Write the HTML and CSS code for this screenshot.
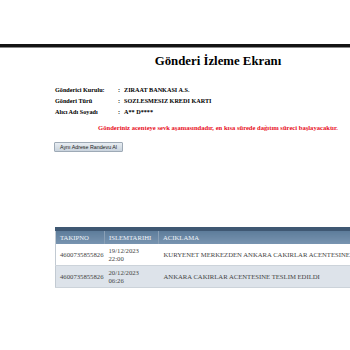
FILE: index.html
```html
<!DOCTYPE html>
<html lang="tr">
<head>
<meta charset="utf-8">
<title>Gönderi İzleme Ekranı</title>
<link rel="stylesheet" href="styles.css">
</head>
<body>
<div class="topbar"></div>
<main class="page">
  <h1 class="title">Gönderi İzleme Ekranı</h1>
  <div class="info">
    <div class="info-row"><span class="info-label">Gönderici Kurulu:</span><span class="info-colon">:</span><span class="info-value">ZIRAAT BANKASI A.S.</span></div>
    <div class="info-row"><span class="info-label">Gönderi Türü</span><span class="info-colon">:</span><span class="info-value">SOZLESMESIZ KREDI KARTI</span></div>
    <div class="info-row"><span class="info-label">Alıcı Adı Soyadı</span><span class="info-colon">:</span><span class="info-value">A** D****</span></div>
  </div>
  <p class="notice">Gönderiniz acenteye sevk aşamasındadır, en kısa sürede dağıtım süreci başlayacaktır.</p>
  <div class="actions"><button class="btn">Aynı Adrese Randevu Al</button></div>
  <table class="grid">
    <thead>
      <tr><th class="c1">TAKIPNO</th><th class="c2">ISLEMTARIHI</th><th class="c3">ACIKLAMA</th></tr>
    </thead>
    <tbody>
      <tr><td>4600735855826</td><td>19/12/2023<br>22:00</td><td>KURYENET MERKEZDEN ANKARA CAKIRLAR ACENTESINE SEVK EDILDI</td></tr>
      <tr class="alt"><td>4600735855826</td><td>20/12/2023<br>06:26</td><td>ANKARA CAKIRLAR ACENTESINE TESLIM EDILDI</td></tr>
    </tbody>
  </table>
</main>
</body>
</html>
```
FILE: styles.css
```css
html, body {
  margin: 0;
  padding: 0;
  overflow: hidden;
  background: #ffffff;
}
body {
  font-family: "Liberation Serif", "Times New Roman", serif;
  color: #000;
  width: 350px;
  height: 350px;
}
.topbar {
  height: 44px;
  border-bottom: 3px solid #141414;
  box-shadow: 0 1px 0 #8a8a8a;
}
.page {
  width: 436px;
}
.title {
  margin: 6px 0 0;
  font-size: 12.8px;
  line-height: 16px;
  font-weight: bold;
  text-align: center;
}
.info {
  margin: 15px 0 0 55px;
  font-size: 6.2px;
  font-weight: bold;
}
.info-row {
  display: flex;
  height: 11px;
  align-items: center;
}
.info-label {
  width: 63px;
}
.info-colon {
  width: 6px;
}
.notice {
  margin: 6px 0 0;
  font-size: 6.6px;
  line-height: 10px;
  font-weight: bold;
  color: #e8101e;
  text-align: center;
}
.actions {
  margin: 9px 0 0 54px;
}
.btn {
  display: block;
  height: 10px;
  width: 69px;
  padding: 0;
  font-family: "Liberation Sans", "DejaVu Sans", sans-serif;
  font-size: 5.3px;
  color: #222;
  border: 1px solid #9eaab6;
  border-radius: 1px;
  background: linear-gradient(#e8edf2, #c9d3dd);
}
.grid {
  margin: 75px 0 0 55px;
  width: 381px;
  border-collapse: collapse;
  border-top: 4px solid #3f5873;
  border-left: 1px solid #c2cad2;
  border-bottom: 1px solid #b9c3cd;
  font-size: 6.7px;
  color: #444;
}
.grid th {
  height: 13px;
  padding: 0 0 0 4px;
  text-align: left;
  font-weight: normal;
  color: #eef3f8;
  background: linear-gradient(#5d7c9a, #7894b0);
  border-right: 1px solid #8aa0b6;
}
.grid .c1 { width: 44px; }
.grid .c2 { width: 49px; }
.grid td {
  padding: 3px 0 3px 4px;
  line-height: 7.5px;
  vertical-align: middle;
  border-bottom: 1px solid #ccd3da;
}
.grid td:nth-child(3) {
  padding-left: 5px;
}
.grid tr.alt td {
  background: #dde3ea;
}
```
